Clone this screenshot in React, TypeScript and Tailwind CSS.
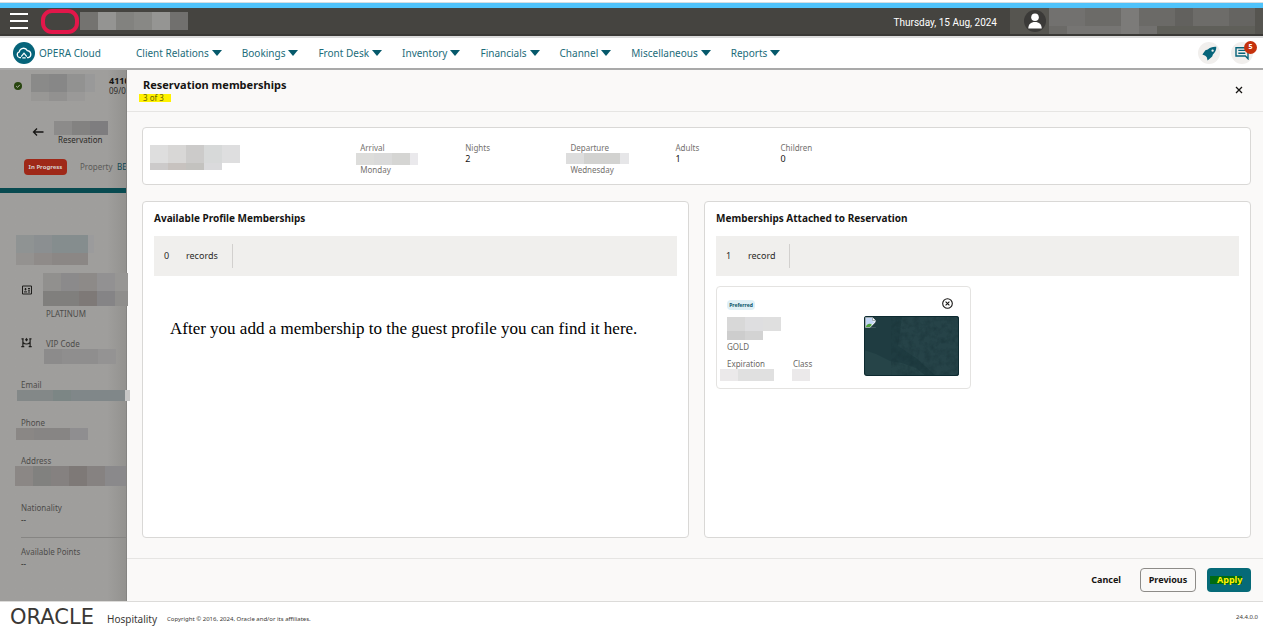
import type { ReactNode } from "react";

const NAV = [
  "Client Relations",
  "Bookings",
  "Front Desk",
  "Inventory",
  "Financials",
  "Channel",
  "Miscellaneous",
  "Reports",
];

// Pixelated block that hides private data. One string of classes per cell.
function Mosaic({ rows, className = "" }: { rows: string[][]; className?: string }) {
  return (
    <div aria-hidden="true" className={`shrink-0 ${className}`}>
      {rows.map((cells, r) => (
        <div key={r} className="flex">
          {cells.map((cell, c) => (
            <span key={c} className={`block shrink-0 ${cell}`} />
          ))}
        </div>
      ))}
    </div>
  );
}

function TopBar() {
  return (
    <>
      <div className="h-[3px] border-b border-[#d5dde2] bg-white" />
      <div className="h-[5px] bg-[#4fc3fb]" />
      <div className="flex h-7 items-center border-b-2 border-[#3a3936] bg-[#454440] pl-2.5">
        <button type="button" aria-label="Menu" className="flex w-[18px] flex-col gap-[5px]">
          <span className="h-0.5 bg-white" />
          <span className="h-0.5 bg-white" />
          <span className="h-0.5 bg-white" />
        </button>
        <div className="ml-[13px] h-[25px] w-[38px] rounded-[11px] border-4 border-[#e3174a]" />
        <Mosaic
          className="ml-px"
          rows={[
            [
              "h-[18px] w-[18px] bg-[#747370]",
              "h-[18px] w-[18px] bg-[#949492]",
              "h-[18px] w-[18px] bg-[#82827f]",
              "h-[18px] w-[18px] bg-[#888885]",
              "h-[18px] w-[18px] bg-[#959593]",
              "h-[18px] w-[18px] bg-[#71706e]",
            ],
          ]}
        />
        <p className="mr-[13px] ml-auto pt-0.5 font-[Roboto] text-[10px] text-white">Thursday, 15 Aug, 2024</p>
        <div className="flex h-full items-center bg-[#565550] pr-2 pl-3.5">
          <span className="mr-[3px] flex size-[22px] items-center justify-center rounded-full bg-[#3b3a38]">
            <svg viewBox="0 0 14 16" className="h-4 w-3.5" fill="#fff" aria-hidden="true">
              <circle cx="7" cy="4.3" r="3.8" />
              <path d="M.3 15.5C.3 11.3 2.8 9 7 9s6.7 2.3 6.7 6.5z" />
            </svg>
          </span>
          <Mosaic
            rows={[
              [
                "h-[18px] w-9 bg-[#72716f]",
                "h-[18px] w-9 bg-[#6c6b68]",
                "h-[18px] w-[18px] bg-[#7c7b79]",
                "h-[18px] w-9 bg-[#6b6a67]",
                "h-[18px] w-[18px] bg-[#62615e]",
                "h-[18px] w-9 bg-[#6d6c69]",
                "h-[18px] w-[26px] bg-[#656461]",
              ],
              [
                "h-2 w-[18px] bg-[#6b6a67]",
                "h-2 w-[54px] bg-[#767573]",
                "h-2 w-[18px] bg-[#7c7b79]",
                "h-2 w-[18px] bg-[#72716f]",
                "h-2 w-[98px] bg-[#5f5f59]",
              ],
            ]}
          />
        </div>
      </div>
    </>
  );
}

function NavBar() {
  return (
    <header className="flex h-[34px] items-center border-t-2 border-b-2 border-t-[#dcdcdc] border-b-[#a9a9a9] bg-white pl-[13px] text-[10px] text-[#1c6c7a]">
      <a href="#home" className="flex w-[123px] items-center gap-1">
        <span className="flex size-[22px] items-center justify-center rounded-full bg-[#06647a]">
          <svg viewBox="0 0 16 12" className="h-3 w-4" fill="none" stroke="#fff" strokeWidth="1.3" aria-hidden="true">
            <path d="M5 10.6H3.7A2.9 2.9 0 0 1 3.2 5 4.3 4.3 0 0 1 11.3 3.6 3.6 3.6 0 0 1 12.4 10.6H11" />
            <path d="M5.2 9.6 8 6.2l2.8 3.4M6.3 10.9h3.4" />
          </svg>
        </span>
        OPERA Cloud
      </a>
      <nav className="flex gap-5">
        {NAV.map((item) => (
          <button key={item} type="button" className="flex items-center gap-[3px]">
            {item}
            <svg viewBox="0 0 10 6" className="h-1.5 w-2.5" fill="#06596b" aria-hidden="true">
              <path d="M0 0h10L5 6z" />
            </svg>
          </button>
        ))}
      </nav>
      <div className="mr-2.5 ml-auto flex gap-[11px]">
        <button type="button" aria-label="What's new" className="flex size-[22px] items-center justify-center rounded-full bg-[#f1efed]">
          <svg viewBox="0 0 15 15" className="size-[15px]" aria-hidden="true">
            <path
              fill="#06647a"
              fillRule="evenodd"
              d="M14.3.8C10.6.6 8.1 1.4 5.8 3.6L3.4 4.3.4 8.4l2.9 1.3 1.5 1.5.8 3.4 4.6-4 .7-2.2c2.4-2.2 3.5-4.4 3.4-7.6zM10.6 3.4a1.2 1.2 0 1 1 0 2.4 1.2 1.2 0 0 1 0-2.4z"
            />
          </svg>
        </button>
        <button type="button" aria-label="Notifications" className="relative flex size-[22px] items-center justify-center rounded-full bg-[#f1efed]">
          <svg viewBox="0 0 14 14" className="size-3.5" fill="none" stroke="#06647a" strokeWidth="1.4" aria-hidden="true">
            <path d="M1 1.7h12v11L10.4 10H1z" />
            <path d="M3.3 4.4h7M3.3 7.2h7" />
          </svg>
          <span className="absolute -top-px -right-1 flex size-[13px] items-center justify-center rounded-full bg-[#c5310c] text-[7px] font-bold text-white">
            5
          </span>
        </button>
      </div>
    </header>
  );
}

function SideField({ label, className, children }: { label: string; className: string; children: ReactNode }) {
  return (
    <div className={className}>
      <p className="ml-[21px] text-[#4d4c4a]">{label}</p>
      {children}
    </div>
  );
}

function Sidebar() {
  return (
    <aside className="relative z-10 w-[127px] shrink-0 border-r border-[#858482] bg-linear-to-r from-[#9f9e9c] from-85% to-[#93928f] text-[8px] leading-[10px] whitespace-nowrap">
      <div className="h-[118px] overflow-hidden">
        <div className="flex pt-1">
          <svg viewBox="0 0 8 8" className="mt-2 ml-3.5 size-2 shrink-0" aria-hidden="true">
            <circle cx="4" cy="4" r="4" fill="#28450f" />
            <path d="m2.2 4.1 1.3 1.3 2.3-2.5" fill="none" stroke="#b5b5ab" />
          </svg>
          <Mosaic
            className="ml-[9px] w-16"
            rows={[
              [
                "h-[18px] w-[18px] bg-[#8a8a89]",
                "h-[18px] w-[18px] bg-[#878787]",
                "h-[18px] w-[18px] bg-[#929291]",
                "h-[18px] w-2.5 bg-[#999]",
              ],
              ["h-[9px] w-[18px] bg-[#989795]", "h-[9px] w-[18px] bg-[#929190]", "h-[9px] w-[18px] bg-[#9a9998]"],
            ]}
          />
          <div className="ml-3.5 pt-0.5">
            <p className="text-[9px] font-bold text-[#161513]">4110</p>
            <p className="text-[#2b2a28]">09/0</p>
          </div>
        </div>

        <div className="mt-5 flex">
          <button type="button" aria-label="Back" className="mt-1.5 ml-8 flex h-2.5 w-3">
            <svg viewBox="0 0 12 10" className="h-2.5 w-3" fill="none" stroke="#161513" strokeWidth="1.3" aria-hidden="true">
              <path d="M11.5 5H1.5M5 1.5 1.5 5 5 8.5" />
            </svg>
          </button>
          <div className="ml-2.5">
            <Mosaic
              rows={[
                [
                  "h-3.5 w-[18px] bg-[#8c8b8a]",
                  "h-3.5 w-[18px] bg-[#838281]",
                  "h-3.5 w-[18px] bg-[#7e7d7f]",
                ],
              ]}
            />
            <p className="ml-1 text-[#2b2a28]">Reservation</p>
          </div>
        </div>

        <div className="mt-3.5 ml-6 flex items-center text-[#5b5a58]">
          <span className="flex h-4 w-[43px] shrink-0 items-center justify-center rounded bg-[#9f2818] text-[6px] font-bold text-[#d5cdca]">
            In Progress
          </span>
          <span className="ml-[13px] w-[37px] shrink-0">Property</span>
          <a href="#property" className="text-[#0f4652]">
            BE
          </a>
        </div>
      </div>
      <div className="h-[5px] bg-[#084a50]" />

      <Mosaic
        className="mt-[42px] ml-4"
        rows={[
          [
            "h-[18px] w-[18px] bg-[#8f9393]",
            "h-[18px] w-[18px] bg-[#8b8f91]",
            "h-[18px] w-9 bg-[#858d8e]",
            "h-[18px] w-1.5 bg-[#9b9b9c]",
          ],
          ["h-3 w-[18px] bg-[#949290]", "h-3 w-[18px] bg-[#8f8b89]", "h-3 w-9 bg-[#8b8785]"],
        ]}
      />

      <div className="mt-2 flex">
        <svg viewBox="0 0 10 10" className="mt-3 ml-[22px] size-2.5 shrink-0" fill="none" stroke="#1f1e1c" aria-hidden="true">
          <path d="M.5 1h9v8h-9z" />
          <path d="M2 6.9h3M3.5 3v2.4M2.5 4.2h2M6 3.5h2M6 5.2h2M6 7h2" />
        </svg>
        <div className="ml-[11px]">
          <Mosaic
            rows={[
              [
                "h-[18px] w-[18px] bg-[#91908e]",
                "h-[18px] w-[18px] bg-[#8b8a8b]",
                "h-[18px] w-[18px] bg-[#8d8a88]",
                "h-[18px] w-[18px] bg-[#929192]",
                "h-[18px] w-[13px] bg-[#979694]",
              ],
              [
                "h-[15px] w-9 bg-[#807f7d]",
                "h-[15px] w-[18px] bg-[#7e7977]",
                "h-[15px] w-[18px] bg-[#858486]",
                "h-[15px] w-[13px] bg-[#8f8e8c]",
              ],
            ]}
          />
          <p className="mt-[3px] ml-[3px] text-[#4d4c4a]">PLATINUM</p>
        </div>
      </div>

      <div className="mt-5 flex">
        <svg viewBox="0 0 11 11" className="-mt-0.5 ml-[21px] size-[11px] shrink-0" fill="none" stroke="#1f1e1c" strokeWidth="1.2" aria-hidden="true">
          <path d="M.5 1.8h2.2M8.3 1.8h2.2M1.9 1.8v7.7M9.1 1.8v7.7M.3 9.6h3M7.7 9.6h3M2 5.5c2 2 5 2 7 0" />
          <path d="M4 2.8 5.5.8 7 2.8 5.5 4.4z" fill="#1f1e1c" stroke="none" />
        </svg>
        <div className="ml-3">
          <p className="ml-0.5 text-[#4d4c4a]">VIP Code</p>
          <Mosaic
            rows={[["h-[15px] w-[18px] bg-[#8c8b8b]", "h-[15px] w-9 bg-[#8f8e8e]", "h-[15px] w-[18px] bg-[#949393]"]]}
          />
        </div>
      </div>

      <SideField label="Email" className="mt-4">
        <Mosaic
          className="ml-[17px]"
          rows={[
            [
              "h-[11px] w-9 bg-[#838888]",
              "h-[11px] w-[18px] bg-[#7c8685]",
              "h-[11px] w-[54px] bg-[#808789]",
              "h-[11px] w-[5px] bg-[#c6c6c6]",
            ],
          ]}
        />
      </SideField>
      <SideField label="Phone" className="mt-[17px]">
        <Mosaic
          className="ml-4"
          rows={[["h-3 w-[18px] bg-[#8a8785]", "h-3 w-9 bg-[#878584]", "h-3 w-[18px] bg-[#8f8e90]"]]}
        />
      </SideField>
      <SideField label="Address" className="mt-4">
        <Mosaic
          className="ml-[15px]"
          rows={[
            [
              "h-5 w-[18px] bg-[#8b8785]",
              "h-5 w-[18px] bg-[#81817f]",
              "h-5 w-[18px] bg-[#858180]",
              "h-5 w-[18px] bg-[#7e7977]",
              "h-5 w-[18px] bg-[#868281]",
              "h-5 w-[21px] bg-[#8a898b]",
            ],
          ]}
        />
      </SideField>
      <SideField label="Nationality" className="mt-[17px]">
        <p className="mt-0.5 ml-[21px] text-[#2b2a28]">--</p>
      </SideField>
      <hr className="mt-3 ml-[21px] border-[#868583]" />
      <SideField label="Available Points" className="mt-[9px]">
        <p className="mt-0.5 ml-[21px] text-[#2b2a28]">--</p>
      </SideField>
    </aside>
  );
}

function Stat({ label, value, children }: { label: string; value?: string; children?: ReactNode }) {
  return (
    <div className="leading-[11px]">
      <p className="text-[8px] text-[#74716e]">{label}</p>
      {value && <p className="text-[9px] text-[#161513]">{value}</p>}
      {children}
    </div>
  );
}

function SummaryCard() {
  return (
    <section className="grid h-[58px] grid-cols-[2fr_repeat(5,1fr)_3.4fr] rounded border border-[#d9d8d6] bg-white px-[7px] pt-3.5">
      <Mosaic
        className="pt-[3px]"
        rows={[
          [
            "h-[18px] w-[18px] bg-[#dedede]",
            "h-[18px] w-[18px] bg-[#d8d7d6]",
            "h-[18px] w-[18px] bg-[#cccbca]",
            "h-[18px] w-[18px] bg-[#d7d9d9]",
            "h-[18px] w-[18px] bg-[#dededf]",
          ],
          ["h-[7px] w-[18px] bg-[#cccaca]", "h-[7px] w-[18px] bg-[#c7c2bf]", "h-[7px] w-[18px] bg-[#c3c2bf]", "h-[7px] w-[18px] bg-[#dadadc]"],
        ]}
      />
      <Stat label="Arrival">
        <Mosaic
          className="-ml-1"
          rows={[["h-3 w-[18px] bg-[#dddddb]", "h-3 w-[18px] bg-[#dadada]", "h-3 w-[18px] bg-[#d5d5d3]", "h-3 w-2 bg-[#eae9ec]"]]}
        />
        <p className="-mt-px text-[8px] text-[#74716e]">Monday</p>
      </Stat>
      <Stat label="Nights" value="2" />
      <Stat label="Departure">
        <Mosaic
          className="-ml-1"
          rows={[["h-[11px] w-[18px] bg-[#dddddd]", "h-[11px] w-9 bg-[#d2d2d0]", "h-[11px] w-[9px] bg-[#e6e6e8]"]]}
        />
        <p className="text-[8px] text-[#74716e]">Wednesday</p>
      </Stat>
      <Stat label="Adults" value="1" />
      <Stat label="Children" value="0" />
    </section>
  );
}

function Panel({ title, count, unit, children }: { title: string; count: number; unit: string; children: ReactNode }) {
  return (
    <section className="flex-1 rounded border border-[#d9d8d6] bg-white px-[11px] pt-[9px]">
      <h2 className="text-[10px] leading-3.5 font-bold text-[#161513]">{title}</h2>
      <div className="mt-[11px] flex h-10 items-center bg-[#f0efed] pl-2.5 text-[9px] text-[#2b2a28]">
        <span className="w-[22px]">{count}</span>
        <span className="pr-3.5">{unit}</span>
        <span className="h-6 border-l border-[#d2d0ce]" />
      </div>
      {children}
    </section>
  );
}

function CardImage() {
  return (
    <svg viewBox="0 0 95 60" className="h-[60px] w-[95px] rounded-[3px]" role="img" aria-label="Membership card">
      <filter id="grain" colorInterpolationFilters="sRGB">
        <feTurbulence type="fractalNoise" baseFrequency="0.18" numOctaves="3" seed="4" />
        <feColorMatrix values="0 0 0 0 .1  0 0 0 0 .2  0 0 0 0 .22  2 0 0 0 -.8" />
      </filter>
      <rect width="95" height="60" fill="#264448" />
      <path d="M0 0h95v60H62L52 52 38 47 26 45 12 38 0 34z" fill="#1f3c41" />
      <path d="M38 0h57v60H72L52 42 34 30z" fill="#264348" />
      <path d="M38 0h57v60H72L52 42 34 30z" filter="url(#grain)" opacity=".6" />
      <rect x=".5" y=".5" width="94" height="59" rx="2.5" fill="none" stroke="#0d2a30" />
      <path d="M1.5 1.5h7l3 3v7h-10z" fill="#f3f6f8" stroke="#a9b3b8" strokeWidth=".7" />
      <path d="M8.5 1.5v3h3" fill="#fff" stroke="#7c898f" strokeWidth=".7" />
      <path d="M2 2h6v3l3 1-6 4H2z" fill="#c3d6f5" />
      <path d="M2 10.5c1-3.2 4-3.6 6-1.8l-2 2.3H2z" fill="#4fa23b" />
      <path d="m6 11.8 6-6v6z" fill="#203b41" />
    </svg>
  );
}

function MembershipCard() {
  return (
    <article className="mt-2.5 flex h-[103px] w-[255px] justify-between rounded border border-[#e4e3e1] bg-white pr-[11px] pl-2.5 text-[8px] leading-[10px] text-[#6b6865]">
      <div className="pt-[13px]">
        <span className="flex h-2.5 w-7 items-center justify-center rounded-sm bg-[#dff0f6] text-[5px] font-bold text-[#0b5568]">
          Preferred
        </span>
        <Mosaic
          className="mt-[7px]"
          rows={[
            ["h-3.5 w-[18px] bg-[#d8d8d8]", "h-3.5 w-[18px] bg-[#dedee0]", "h-3.5 w-[18px] bg-[#dfdfdf]"],
            ["h-[9px] w-[18px] bg-[#cdcdcd]", "h-[9px] w-[18px] bg-[#d3d3d3]"],
          ]}
        />
        <p className="mt-0.5">GOLD</p>
        <div className="mt-[7px] flex">
          <div className="w-[66px]">
            <p>Expiration</p>
            <Mosaic className="-ml-[7px]" rows={[["h-3 w-[18px] bg-[#ebe9ea]", "h-3 w-9 bg-[#e0e0e0]"]]} />
          </div>
          <div>
            <p>Class</p>
            <Mosaic className="-ml-px" rows={[["h-3 w-[18px] bg-[#ebe9ea]"]]} />
          </div>
        </div>
      </div>
      <div className="flex flex-col items-end gap-[7px] pt-[11px]">
        <button type="button" aria-label="Remove membership" className="mr-1.5 flex size-[11px]">
          <svg viewBox="0 0 11 11" className="size-[11px]" fill="none" stroke="#161513" strokeWidth="1.1" aria-hidden="true">
            <circle cx="5.5" cy="5.5" r="4.8" />
            <path d="m3.6 3.6 3.8 3.8M7.4 3.6 3.6 7.4" />
          </svg>
        </button>
        <CardImage />
      </div>
    </article>
  );
}

function Drawer() {
  return (
    <main className="flex min-w-0 flex-1 flex-col bg-[#faf9f8]">
      <div className="flex h-[42px] items-center justify-between border-b border-[#e6e5e3] pr-[19px] pb-0.5 pl-3">
        <div>
          <h1 className="ml-1 pb-px text-[11px] leading-4 font-bold text-[#161513]">Reservation memberships</h1>
          <p className="w-8 bg-[#fff100] pl-1 text-[8px] leading-2 text-[#6b6500]">3 of 3</p>
        </div>
        <button type="button" aria-label="Close" className="flex size-2.5 items-center justify-center">
          <svg viewBox="0 0 8 8" className="size-2" fill="none" stroke="#161513" strokeWidth="1.3" aria-hidden="true">
            <path d="m1 1 6 6M7 1 1 7" />
          </svg>
        </button>
      </div>

      <div className="flex flex-1 flex-col gap-4 pt-[15px] pr-3 pb-5 pl-[15px]">
        <SummaryCard />
        <div className="flex flex-1 gap-[15px]">
          <Panel title="Available Profile Memberships" count={0} unit="records">
            <p className="mt-[41px] ml-4 font-['Liberation_Serif',serif] text-[17px] leading-6 text-black">
              After you add a membership to the guest profile you can find it here.
            </p>
          </Panel>
          <Panel title="Memberships Attached to Reservation" count={1} unit="record">
            <MembershipCard />
          </Panel>
        </div>
      </div>

      <div className="flex h-[43px] items-center justify-end gap-[11px] border-t border-[#e6e5e3] pr-3 text-[9px] font-bold text-[#161513]">
        <button type="button" className="h-6 px-2">
          Cancel
        </button>
        <button type="button" className="h-6 w-14 rounded-sm border border-[#8d8b88]">
          Previous
        </button>
        <button type="button" className="flex h-6 w-11 items-center rounded-sm bg-[#066a78] pl-[3px] text-[#fff100]">
          <span className="bg-[#006a12] pl-[7px] leading-2">Apply</span>
        </button>
      </div>
    </main>
  );
}

export default function App() {
  return (
    <div className="flex min-h-screen flex-col bg-white font-['Noto_Sans',sans-serif]">
      <TopBar />
      <NavBar />
      <div className="flex flex-1">
        <Sidebar />
        <Drawer />
      </div>
      <footer className="flex h-[31px] items-center border-t border-[#dcdbd9] pr-[5px] pl-2.5 text-[#3a3835]">
        <span className="w-[97px] font-['DejaVu_Sans',sans-serif] text-[21px] leading-5">ORACLE</span>
        <span className="mt-1 w-[60px] text-[10px]">Hospitality</span>
        <span className="mt-1 text-[6px]">Copyright © 2016, 2024, Oracle and/or its affiliates.</span>
        <span className="ml-auto text-[6px]">24.4.0.0</span>
      </footer>
    </div>
  );
}
